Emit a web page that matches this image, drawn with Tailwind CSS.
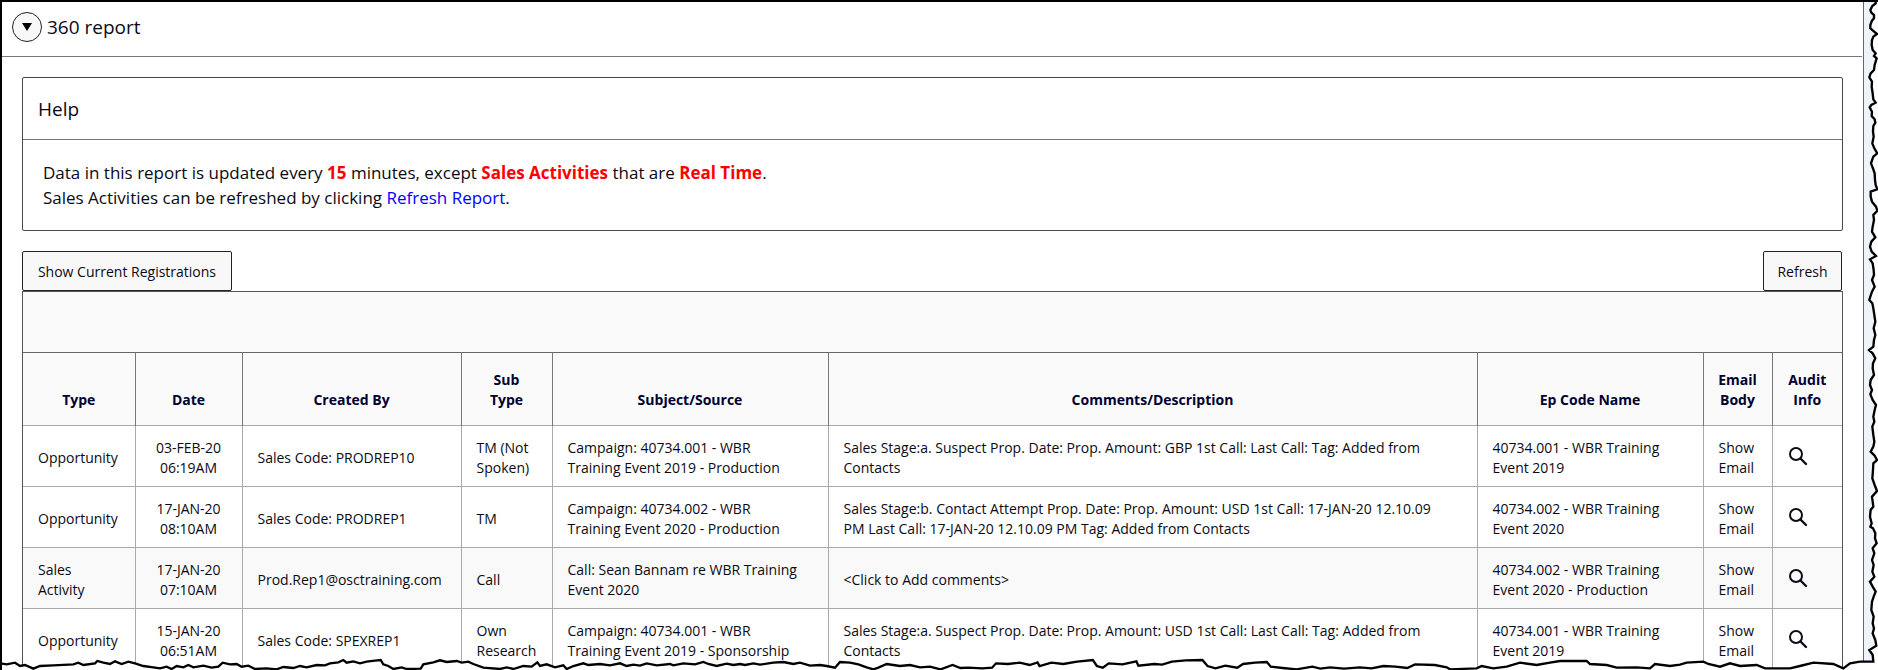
<!DOCTYPE html>
<html lang="en">
<head>
<meta charset="utf-8">
<title>360 report</title>
<script src="https://cdn.jsdelivr.net/npm/@tailwindcss/browser@4"></script>
</head>
<body class="bg-white text-[#0a0a14] font-['Open_Sans',sans-serif]">
<div class="relative h-screen overflow-hidden border-t-2 border-l-2 border-black flex bg-[#f0f4fa]">
  <main class="flex-1 min-w-0 bg-white border-r border-[#666] mr-[14px]">
    <header class="flex items-center gap-[5px] h-[55px] pl-[10px] pb-[5px] mr-[1px] border-b border-[#777]">
      <button type="button" aria-label="Collapse 360 report" class="size-[30px] rounded-full border border-[#222] bg-[#f8f8f8] flex items-center justify-center">
        <svg class="w-[10px] h-[8px]" viewBox="0 0 10 8"><path d="M0 0H10L5 8Z" fill="#000"/></svg>
      </button>
      <h1 class="text-[19px] leading-[26px]">360 report</h1>
    </header>
    <div class="px-5 pt-5">
      <section class="border border-[#4a4a4a] rounded-[2px]">
        <h2 class="h-[62px] px-[15px] pt-[2px] flex items-center text-[19px] border-b border-[#777]">Help</h2>
        <p class="h-[90px] pt-5 px-5 text-[17px] leading-[25px]">Data in this report is updated every <b class="text-[#f00] font-bold">15</b> minutes, except <b class="text-[#f00] font-bold">Sales Activities</b> that are <b class="text-[#f00] font-bold">Real Time</b>.<br>Sales Activities can be refreshed by clicking <a href="#refresh" class="text-[#00f]">Refresh Report</a>.</p>
      </section>
      <div class="flex justify-between mt-5 pr-[1px]">
        <button type="button" class="h-[40px] w-[210px] border border-[#222] rounded-[2px] bg-[#f8f8f8] text-[14px]">Show Current Registrations</button>
        <button type="button" id="refresh" class="h-[40px] w-[79px] border border-[#222] rounded-[2px] bg-[#f8f8f8] text-[14px]">Refresh</button>
      </div>
      <div class="border border-[#555]">
        <div class="h-[60px] bg-[#fafafa]"></div>
        <table class="w-full table-fixed border-collapse text-[14px] leading-[20px] text-left
          [&_th]:h-[73px] [&_th]:border-t [&_th]:border-r [&_th]:border-t-[#666] [&_th]:border-r-[#777] [&_th]:bg-[#fafafa] [&_th]:align-bottom [&_th]:text-center [&_th]:pb-[15px] [&_th]:px-[14px] [&_th]:text-[#000033] [&_th:last-child]:border-r-0
          [&_td]:h-[61px] [&_td]:border-t [&_td]:border-r [&_td]:border-[#aaa] [&_td]:px-[15px] [&_td:last-child]:border-r-0 [&_td]:pt-[3px] [&_td]:pb-0">
          <colgroup>
            <col class="w-[112px]"><col class="w-[107px]"><col class="w-[219px]"><col class="w-[91px]"><col class="w-[276px]"><col><col class="w-[226px]"><col class="w-[69px]"><col class="w-[70px]">
          </colgroup>
          <thead>
            <tr><th scope="col">Type</th><th scope="col">Date</th><th scope="col">Created By</th><th scope="col">Sub<br>Type</th><th scope="col">Subject/Source</th><th scope="col">Comments/Description</th><th scope="col">Ep Code Name</th><th scope="col">Email<br>Body</th><th scope="col">Audit<br>Info</th></tr>
          </thead>
          <tbody>
            <tr><td>Opportunity</td><td class="text-center">03-FEB-20<br>06:19AM</td><td>Sales Code: PRODREP10</td><td>TM (Not<br>Spoken)</td><td>Campaign: 40734.001 - WBR<br>Training Event 2019 - Production</td><td>Sales Stage:a. Suspect Prop. Date: Prop. Amount: GBP 1st Call: Last Call: Tag: Added from<br>Contacts</td><td>40734.001 - WBR Training<br>Event 2019</td><td>Show<br>Email</td><td><button type="button" aria-label="Audit info" class="block mb-1"><svg class="size-5" viewBox="0 0 20 20" fill="none" stroke="#0c0c18"><circle cx="8" cy="8" r="6" stroke-width="2"/><path d="M12.5 12.5L18 18" stroke-width="2.4" stroke-linecap="round"/></svg></button></td></tr>
            <tr><td>Opportunity</td><td class="text-center">17-JAN-20<br>08:10AM</td><td>Sales Code: PRODREP1</td><td>TM</td><td>Campaign: 40734.002 - WBR<br>Training Event 2020 - Production</td><td>Sales Stage:b. Contact Attempt Prop. Date: Prop. Amount: USD 1st Call: 17-JAN-20 12.10.09<br>PM Last Call: 17-JAN-20 12.10.09 PM Tag: Added from Contacts</td><td>40734.002 - WBR Training<br>Event 2020</td><td>Show<br>Email</td><td><button type="button" aria-label="Audit info" class="block mb-1"><svg class="size-5" viewBox="0 0 20 20" fill="none" stroke="#0c0c18"><circle cx="8" cy="8" r="6" stroke-width="2"/><path d="M12.5 12.5L18 18" stroke-width="2.4" stroke-linecap="round"/></svg></button></td></tr>
            <tr class="bg-[#f9f9f9]"><td>Sales<br>Activity</td><td class="text-center">17-JAN-20<br>07:10AM</td><td>Prod.Rep1@osctraining.com</td><td>Call</td><td>Call: Sean Bannam re WBR Training<br>Event 2020</td><td>&lt;Click to Add comments&gt;</td><td>40734.002 - WBR Training<br>Event 2020 - Production</td><td>Show<br>Email</td><td><button type="button" aria-label="Audit info" class="block mb-1"><svg class="size-5" viewBox="0 0 20 20" fill="none" stroke="#0c0c18"><circle cx="8" cy="8" r="6" stroke-width="2"/><path d="M12.5 12.5L18 18" stroke-width="2.4" stroke-linecap="round"/></svg></button></td></tr>
            <tr><td>Opportunity</td><td class="text-center">15-JAN-20<br>06:51AM</td><td>Sales Code: SPEXREP1</td><td>Own<br>Research</td><td>Campaign: 40734.001 - WBR<br>Training Event 2019 - Sponsorship</td><td>Sales Stage:a. Suspect Prop. Date: Prop. Amount: USD 1st Call: Last Call: Tag: Added from<br>Contacts</td><td>40734.001 - WBR Training<br>Event 2019</td><td>Show<br>Email</td><td><button type="button" aria-label="Audit info" class="block mb-1"><svg class="size-5" viewBox="0 0 20 20" fill="none" stroke="#0c0c18"><circle cx="8" cy="8" r="6" stroke-width="2"/><path d="M12.5 12.5L18 18" stroke-width="2.4" stroke-linecap="round"/></svg></button></td></tr>
          </tbody>
        </table>
      </div>
    </div>
  </main>
  <!-- Torn paper edge over the right and bottom sides -->
  <svg class="absolute -top-[2px] -left-[2px] w-screen h-screen pointer-events-none" viewBox="0 0 5634 2010" preserveAspectRatio="none" aria-hidden="true">
    <path id="tear" fill="#fff" stroke="#000" stroke-width="7"/>
    <path d="M0 3H5628" stroke="#000" stroke-width="6"/>
  </svg>
</div>
<script>
  // Each segment: x origin, x scale, y origin, then the x,y pairs along the bottom edge.
  const bottom = [
    [0, 1, 1410, "0,580 20,583 45,578 60,588 75,585 100,596 120,588 160,586 220,583 235,578 250,585 285,580 292,573 310,578 330,582 345,574 365,582 385,575 405,580 430,588 460,592 480,595 500,590 515,597 530,588 550,592 565,585 580,592 610,587 635,593 655,590 668,578 690,583 710,582 725,590 745,587 765,597 800,595 830,598 850,591 880,594 900,588 920,592 950,585 975,586 990,580 1015,577 1030,570 1040,578 1060,574 1080,580 1100,575 1125,572 1142,570 1150,583 1165,588 1180,597 1205,592 1220,597 1262,596 1270,583 1300,577 1320,571 1340,576 1370,573 1385,578"],
    [1320, 1, 1020, "85,965 100,972 130,983 180,987 200,982 220,987 250,978 275,980 292,967 300,978 320,973 345,982 370,976 380,987 400,978 430,970 445,975 480,972 510,976 540,970 560,978 580,974 600,977 620,970 650,976 690,972 700,976 730,970 765,973 790,966 805,972 830,978 860,971 880,975 900,972 915,975 940,970 960,974 1000,968 1030,966 1060,972 1080,968 1110,977 1140,975 1160,978 1185,983 1200,966 1230,968 1255,973 1280,982 1300,988 1315,983 1340,972 1380,978 1410,975 1440,982 1470,980 1490,985"],
    [2490, 1.186, 1020, "280,988 310,975 330,984 350,983 385,985 410,983 420,970 450,972 480,968 505,975 525,967 530,978 560,968 590,972 625,965 665,960 675,978 690,983 705,970 740,973 775,964 780,977 820,972 840,974 865,965 900,961 942,960 955,978 975,985 1000,977 1030,983 1045,972 1075,968 1105,966 1115,980 1145,984 1180,988 1220,980 1240,986 1265,982 1300,986 1340,982 1370,985 1400,978 1430,980 1460,984 1480,973 1530,975 1560,982"],
    [4320, 1, 1020, "30,988 110,985 125,978 160,985 200,980 240,968 290,975 330,968 360,963 440,963 450,972 500,975 530,983 590,982 630,985 645,972 690,978 720,974 740,968 790,965 805,972 840,980 870,970 900,978 950,975 975,985 1050,985 1080,978 1120,968 1180,972 1210,985 1230,970 1260,965 1285,965"]
  ];
  // Right edge, top to bottom: y, x pairs.
  const right = [
    [0, "0,113 10,113 18,103 30,97 38,100 45,108 55,108 62,102 75,97 85,97 92,105 102,117 110,106 120,102 135,101 150,104 160,113 168,108 175,116 185,113 195,110 210,108 220,98 232,94 245,102 260,101 280,104 298,106 308,113 315,100 322,95 335,102 348,101 358,110 368,112 378,106 395,105 410,107 430,103 445,109 460,118 470,106 490,99 505,105 520,110 540,111 555,113 568,118 575,98 590,98 605,102 620,114 632,118 645,106 660,108 680,104 695,102 712,112 725,100 740,96 755,101 768,114 778,96 790,104 810,107 825,108 840,102 860,110 875,102 890,97 900,94 910,103 925,106 945,109 965,112 985,107"],
    [1005, "0,112 15,108 35,106 45,93 55,104 70,112 85,105 100,104 120,108 135,98 150,96 165,102 178,97 195,104 210,114 225,110 245,106 260,109 275,103 300,106 320,109 335,106 350,98 362,110 375,117 385,106 405,105 430,103 450,110 468,117 485,102 500,104 515,106 525,98 545,96 565,101 575,97 580,105 595,112 610,111 625,116 640,104 655,109 675,102 690,107 710,103 725,109 740,96 755,104 770,113 785,107 800,102 825,100 845,107 865,104 880,108 895,104 915,112 932,115 945,94 960,104 980,106"]
  ];
  const pairs = s => s.split(" ").map(p => p.split(",").map(Number));
  const points = [
    ...bottom.flatMap(([ox, sx, oy, s]) => pairs(s).map(([x, y]) => [ox + x * sx, oy + y])),
    ...right.flatMap(([oy, s]) => pairs(s).map(([y, x]) => [5514 + x, oy + y])).reverse()
  ];
  document.getElementById("tear").setAttribute("d",
    "M-20 2050L-20 1990L" + points.map(p => p.join(" ")).join("L") + "L5627 -20H5700V2050Z");
</script>
</body>
</html>
